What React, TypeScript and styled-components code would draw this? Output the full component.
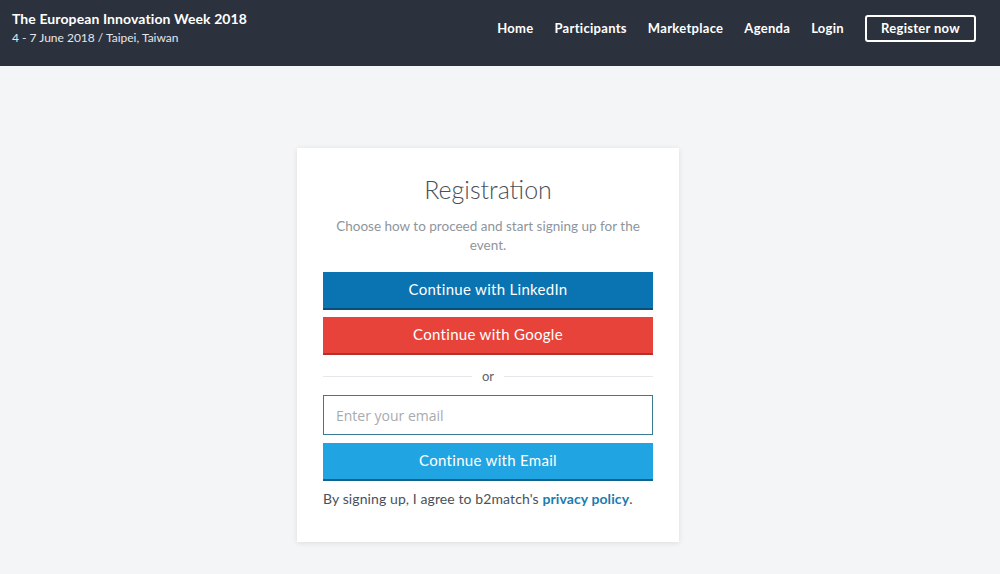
import React from "react";
import styled, { createGlobalStyle } from "styled-components";

const Global = createGlobalStyle`
  html, body { margin: 0; padding: 0; }
  body {
    background: #f4f5f7;
    font-family: "Lato", "Open Sans", "Liberation Sans", sans-serif;
    color: #3b414a;
  }
  * { box-sizing: border-box; }
`;

const Page = styled.div`
  min-height: 574px;
  display: flex;
  flex-direction: column;
`;

const Header = styled.header`
  height: 66px;
  background: #2b323d;
  display: flex;
  align-items: center;
  justify-content: space-between;
  padding: 0 24px 10px 12px;
`;

const Brand = styled.div`
  display: flex;
  flex-direction: column;
  gap: 3px;
  color: #fff;
  margin-top: -2px;
`;

const BrandTitle = styled.div`
  font-size: 14px;
  font-weight: 700;
  letter-spacing: 0.1px;
`;

const BrandSub = styled.div`
  font-size: 12px;
  color: #e4e6ea;
`;

const Nav = styled.nav`
  display: flex;
  align-items: center;
  gap: 21px;
`;

const NavLink = styled.a`
  color: #fff;
  font-size: 13px;
  font-weight: 700;
  letter-spacing: 0.3px;
  text-decoration: none;
`;

const RegisterBtn = styled.a`
  color: #fff;
  font-size: 13px;
  font-weight: 700;
  letter-spacing: 0.3px;
  border: 2px solid #fff;
  border-radius: 3px;
  height: 27px;
  width: 111px;
  display: flex;
  align-items: center;
  justify-content: center;
`;

const Main = styled.main`
  display: flex;
  justify-content: center;
  padding: 82px 24px 0 0;
`;

const Card = styled.div`
  width: 382px;
  background: #fff;
  box-shadow: 0 1px 6px rgba(0, 0, 0, 0.1);
  padding: 26px 26px 35px;
  display: flex;
  flex-direction: column;
`;

const Title = styled.h1`
  margin: 0;
  text-align: center;
  font-size: 25px;
  font-weight: 300;
  color: #4a5059;
  line-height: 30px;
`;

const Subtitle = styled.p`
  margin: 13px 10px 17px;
  text-align: center;
  font-size: 13.5px;
  line-height: 19px;
  color: #8f959c;
`;

const SocialBtn = styled.button<{ $bg: string; $edge: string }>`
  height: 38px;
  width: 100%;
  border: none;
  border-bottom: 2px solid ${(p) => p.$edge};
  background: ${(p) => p.$bg};
  color: #fff;
  font-family: inherit;
  font-size: 15px;
  letter-spacing: 0.3px;
  display: flex;
  align-items: center;
  justify-content: center;
  padding: 0 0 2px;
  cursor: pointer;
`;

const Stack = styled.div<{ $gap: number }>`
  display: flex;
  flex-direction: column;
  gap: ${(p) => p.$gap}px;
`;

const Divider = styled.div`
  display: flex;
  align-items: center;
  gap: 10px;
  margin: 13px 0 11px;
  font-size: 13px;
  color: #5b6169;
  &::before, &::after {
    content: "";
    flex: 1;
    height: 1px;
    background: #e6e8eb;
  }
`;

const Input = styled.input`
  height: 40px;
  width: 100%;
  border: 1px solid #3a7a90;
  padding: 0 12px;
  font-family: "Open Sans", "Liberation Sans", sans-serif;
  font-size: 14px;
  color: #333;
  outline: none;
  &::placeholder { color: #a7abb0; }
`;

const Terms = styled.p`
  margin: 9px 0 0;
  font-size: 14px;
  color: #4a5059;
  letter-spacing: 0.1px;
`;

const Link = styled.a`
  color: #1c7cae;
  font-weight: 700;
  text-decoration: none;
`;

export default function App() {
  return (
    <Page>
      <Global />
      <Header>
        <Brand>
          <BrandTitle>The European Innovation Week 2018</BrandTitle>
          <BrandSub>4 - 7 June 2018 / Taipei, Taiwan</BrandSub>
        </Brand>
        <Nav>
          <NavLink>Home</NavLink>
          <NavLink>Participants</NavLink>
          <NavLink>Marketplace</NavLink>
          <NavLink>Agenda</NavLink>
          <NavLink>Login</NavLink>
          <RegisterBtn>Register now</RegisterBtn>
        </Nav>
      </Header>
      <Main>
        <Card>
          <Title>Registration</Title>
          <Subtitle>Choose how to proceed and start signing up for the event.</Subtitle>
          <Stack $gap={7}>
            <SocialBtn $bg="#0a74b3" $edge="#0b4e78">Continue with LinkedIn</SocialBtn>
            <SocialBtn $bg="#e8433a" $edge="#b4302a">Continue with Google</SocialBtn>
          </Stack>
          <Divider>or</Divider>
          <Stack $gap={8}>
            <Input placeholder="Enter your email" />
            <SocialBtn $bg="#21a5e2" $edge="#12638a">Continue with Email</SocialBtn>
          </Stack>
          <Terms>
            By signing up, I agree to b2match's <Link>privacy policy</Link>.
          </Terms>
        </Card>
      </Main>
    </Page>
  );
}
